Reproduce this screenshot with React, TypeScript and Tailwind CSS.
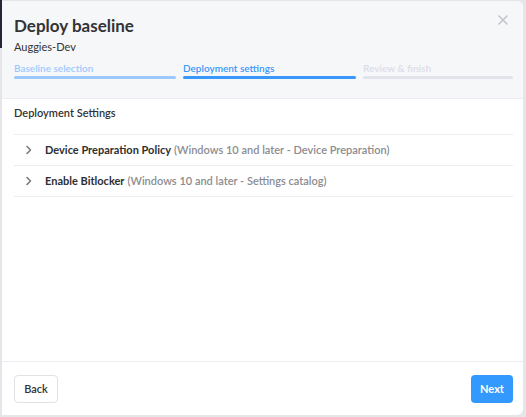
import React from 'react';

const steps = [
  { label: 'Baseline selection', text: 'text-[#9ccafd]', bar: 'bg-[#9ccafd]' },
  { label: 'Deployment settings', text: 'text-[#3a97fb]', bar: 'bg-[#3a97fb]' },
  { label: 'Review & finish', text: 'text-[#dcdce8]', bar: 'bg-[#e3e3ee]' },
];

const policies = [
  { name: 'Device Preparation Policy', kind: 'Windows 10 and later - Device Preparation' },
  { name: 'Enable Bitlocker', kind: 'Windows 10 and later - Settings catalog' },
];

const Chevron = () => (
  <svg width="8" height="10" viewBox="0 0 8 10" fill="none" className="shrink-0">
    <path d="M2 1.5 L5.5 5 L2 8.5" stroke="#7a7a80" strokeWidth="1.6" strokeLinecap="round" strokeLinejoin="round" />
  </svg>
);

export default function App() {
  return (
    <div className="relative w-[526px] h-[417px] bg-[#e6e6ea] pt-px pl-[2px] pr-[3px] pb-[2px] font-['Lato',sans-serif]">
      <div className="absolute left-0 top-0 w-[2px] h-[48px] bg-[#262636]" />
      <div className="flex flex-col h-full bg-white rounded-r-[6px] overflow-hidden">
        {/* header */}
        <div className="relative bg-[#f6f7f9] border-b border-[#ececf0] pl-[12px] pr-[10px] pt-[13px] pb-[19px]">
          <button className="absolute right-[13px] top-[12px] text-[#c3c3ca]">
            <svg width="14" height="14" viewBox="0 0 14 14" fill="none">
              <path d="M3 3 L11 11 M11 3 L3 11" stroke="currentColor" strokeWidth="1.6" strokeLinecap="round" />
            </svg>
          </button>
          <h2 className="text-[17px] leading-[24px] font-bold text-[#333336]">Deploy baseline</h2>
          <p className="mt-[2px] text-[11px] leading-[14px] text-[#333]">Auggies-Dev</p>
          <div className="mt-[7px] flex gap-[7px]">
            {steps.map((s, i) => (
              <div key={i} className={i === 0 ? 'w-[162px]' : i === 1 ? 'w-[173px]' : 'flex-1'}>
                <div className={`text-[10px] leading-[14px] font-semibold ${s.text}`}>{s.label}</div>
                <div className={`mt-px h-[3px] rounded-full ${s.bar}`} />
              </div>
            ))}
          </div>
        </div>

        {/* body */}
        <div className="flex-1 pl-[12px] pr-[10px] pt-[7px]">
          <h3 className="text-[11px] leading-[14px] font-semibold text-[#333]">Deployment Settings</h3>
          <div className="mt-[14px] border-t border-[#ececf2]">
            {policies.map((p) => (
              <div key={p.name} className="flex items-center h-[31px] pl-[11px] border-b border-[#ececf2]">
                <Chevron />
                <span className="ml-[12px] text-[11px] font-bold text-[#2e2e30]">{p.name}</span>
                <span className="ml-[3px] text-[11px] font-semibold text-[#8c8c90]">({p.kind})</span>
              </div>
            ))}
          </div>
        </div>

        {/* footer */}
        <div className="flex justify-between items-center border-t border-[#ececf2] pl-[12px] pr-[10px] pt-[13px] pb-[12px]">
          <button className="h-[28px] w-[44px] rounded-[4px] border border-[#e2e2e6] bg-white text-[11px] font-semibold text-[#333]">
            Back
          </button>
          <button className="h-[28px] w-[42px] rounded-[4px] bg-[#3399ff] text-[11px] font-bold text-white">
            Next
          </button>
        </div>
      </div>
    </div>
  );
}
